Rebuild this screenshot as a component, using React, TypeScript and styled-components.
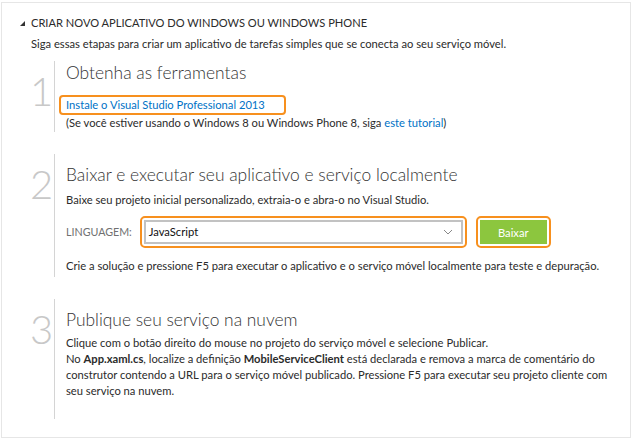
import React from "react";
import styled, { createGlobalStyle } from "styled-components";

const Global = createGlobalStyle`
  html, body { margin: 0; padding: 0; background: #ffffff; }
  body { font-family: "Lato", "Noto Sans", "Liberation Sans", sans-serif; color: #2b2b2b; }
  * { box-sizing: border-box; }
`;

const Frame = styled.section`
  margin: 2px 0 0 1px;
  width: 630px;
  height: 436px;
  border: 1px solid #e6e6e6;
  padding: 12px 4px 0 18px;
`;

const Header = styled.div`
  display: flex;
  align-items: center;
  gap: 6px;
  font-size: 11.1px;
  line-height: 16px;
  text-transform: uppercase;
  color: #2b2b2b;
`;

const Caret = styled.span`
  width: 0;
  height: 0;
  border-left: 5px solid transparent;
  border-bottom: 5px solid #333;
  margin-top: 1px;
`;

const Intro = styled.p`
  margin: 5px 0 0 11px;
  font-size: 11.2px;
  line-height: 16px;
`;

const Steps = styled.div`
  display: flex;
  flex-direction: column;
  gap: 22px;
  margin-top: 9px;
  padding-left: 10px;
`;

const Step = styled.div`
  display: grid;
  grid-template-columns: 24px 1fr;
`;

const Num = styled.div`
  font-size: 40px;
  line-height: 40px;
  font-weight: 300;
  color: #c8c8c8;
  text-align: center;
  padding-top: 10px;
  padding-right: 2px;
`;

const Body = styled.div<{ $padTop: number; $padBottom: number }>`
  border-left: 1px solid #d4d4d4;
  padding: ${(p) => p.$padTop}px 0 ${(p) => p.$padBottom}px 11px;
  font-size: 11.2px;
  line-height: 16px;
`;

const Title = styled.h2`
  margin: 0;
  font-size: 17.4px;
  line-height: 24px;
  font-weight: 300;
  color: #333;
`;

const Sub = styled.p<{ $mt?: number }>`
  margin: ${(p) => p.$mt ?? 0}px 0 0 0;
  white-space: nowrap;
`;

const Link = styled.a`
  color: #0072c6;
  text-decoration: none;
`;

const Highlight = styled.div`
  display: inline-block;
  margin: 10px 0 0 -7px;
  width: 227px;
  height: 20px;
  border: 2px solid #f7901e;
  border-radius: 4px;
  padding: 0 5px;
  line-height: 16px;
  white-space: nowrap;
`;

const Row = styled.div`
  display: flex;
  align-items: center;
  margin: 8px 0 10px 0;
`;

const Label = styled.span`
  font-size: 10.7px;
  color: #707070;
  text-transform: uppercase;
  margin-right: 8px;
`;

const Ring = styled.div<{ $w: number; $ml?: number }>`
  width: ${(p) => p.$w}px;
  height: 32px;
  margin-left: ${(p) => p.$ml ?? 0}px;
  border: 2px solid #f7901e;
  border-radius: 5px;
  padding: 2px;
  display: flex;
`;

const Select = styled.div`
  flex: 1;
  display: flex;
  align-items: center;
  justify-content: space-between;
  border: 2px solid #c2c2c2;
  background: #fff;
  padding: 0 8px 0 3px;
  font-size: 11.2px;
  color: #111;
`;

const Button = styled.button`
  flex: 1;
  border: none;
  background: #8cc63e;
  color: #fff;
  font-family: inherit;
  font-size: 11.2px;
  padding: 0;
`;

const Para = styled.p`
  margin: 0;
  white-space: nowrap;
`;

export default function App() {
  return (
    <>
      <Global />
      <Frame>
        <Header>
          <Caret />
          <span>Criar novo aplicativo do Windows ou Windows Phone</span>
        </Header>
        <Intro>Siga essas etapas para criar um aplicativo de tarefas simples que se conecta ao seu serviço móvel.</Intro>
        <Steps>
          <Step>
            <Num>1</Num>
            <Body $padTop={0} $padBottom={1}>
              <Title>Obtenha as ferramentas</Title>
              <Highlight>
                <Link href="#">Instale o Visual Studio Professional 2013</Link>
              </Highlight>
              <Sub>
                (Se você estiver usando o Windows 8 ou Windows Phone 8, siga <Link href="#">este tutorial</Link>)
              </Sub>
            </Body>
          </Step>
          <Step>
            <Num>2</Num>
            <Body $padTop={9} $padBottom={3}>
              <Title>Baixar e executar seu aplicativo e serviço localmente</Title>
              <Sub $mt={5}>Baixe seu projeto inicial personalizado, extraia-o e abra-o no Visual Studio.</Sub>
              <Row>
                <Label>Linguagem:</Label>
                <Ring $w={327}>
                  <Select>
                    <span>JavaScript</span>
                    <svg width="10" height="6" viewBox="0 0 10 6">
                      <path d="M1 1l4 4 4-4" fill="none" stroke="#888" strokeWidth="1" />
                    </svg>
                  </Select>
                </Ring>
                <Ring $w={75} $ml={9}>
                  <Button>Baixar</Button>
                </Ring>
              </Row>
              <Sub>Crie a solução e pressione F5 para executar o aplicativo e o serviço móvel localmente para teste e depuração.</Sub>
            </Body>
          </Step>
          <Step>
            <Num>3</Num>
            <Body $padTop={9} $padBottom={20}>
              <Title>Publique seu serviço na nuvem</Title>
              <Sub $mt={3}>Clique com o botão direito do mouse no projeto do serviço móvel e selecione Publicar.</Sub>
              <Para>
                No <b>App.xaml.cs</b>, localize a definição <b>MobileServiceClient</b> está declarada e remova a marca de comentário do
                <br />
                construtor contendo a URL para o serviço móvel publicado. Pressione F5 para executar seu projeto cliente com
                <br />
                seu serviço na nuvem.
              </Para>
            </Body>
          </Step>
        </Steps>
      </Frame>
    </>
  );
}
